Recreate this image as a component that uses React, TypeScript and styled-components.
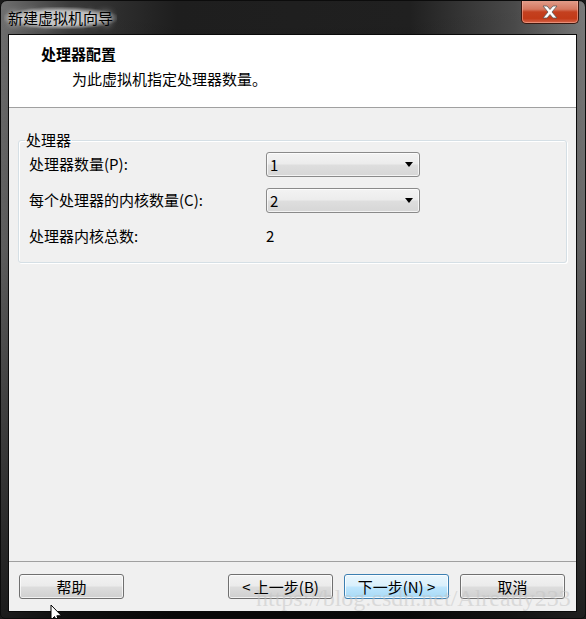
import styled, { createGlobalStyle } from 'styled-components';

const GlobalStyle = createGlobalStyle`
  html, body {
    margin: 0;
    padding: 0;
    background: #1a1a1a;
  }
  body {
    font-family: "Noto Sans CJK SC", "Noto Sans", "Liberation Sans", sans-serif;
  }
`;

const Window = styled.div`
  position: relative;
  width: 586px;
  height: 619px;
  box-sizing: border-box;
  display: flex;
  flex-direction: column;
  border: 1px solid #0c0c0c;
  border-radius: 7px 7px 5px 5px;
  overflow: hidden;
  background:
    linear-gradient(to bottom, rgba(0, 0, 0, 0) 0%, rgba(0, 0, 0, 0.15) 40%, rgba(0, 0, 0, 0.75) 100%),
    linear-gradient(to right, #6e6e6e 0%, #3a3a3a 12%, #1e1e1e 30%, #202020 70%, #4a4a4a 88%, #7a7a7a 100%);
`;

const TitleBar = styled.div`
  height: 33px;
  display: flex;
  align-items: flex-start;
  justify-content: space-between;
  padding-left: 3px;
  padding-right: 6px;
`;

const Title = styled.div`
  margin-top: 6px;
  padding: 0 4px;
  font-size: 15px;
  line-height: 22px;
  color: #000;
  background: radial-gradient(ellipse at center, rgba(200, 200, 200, 0.85) 45%, rgba(160, 160, 160, 0) 75%);
  text-shadow: 0 0 6px rgba(255, 255, 255, 0.9);
`;

const CloseButton = styled.div`
  width: 58px;
  height: 24px;
  margin-top: -1px;
  box-sizing: border-box;
  border: 1px solid #3a1810;
  border-top: none;
  border-radius: 0 0 5px 5px;
  display: flex;
  align-items: center;
  justify-content: center;
  background: linear-gradient(to bottom, #e3a08e 0%, #d57860 40%, #c4401f 52%, #c23a18 80%, #d5644a 100%);
  box-shadow: inset 0 0 0 1px rgba(255, 190, 170, 0.5);
`;

const Client = styled.div`
  flex: 1;
  margin: 0 8px 6px 7px;
  display: flex;
  flex-direction: column;
  border: 1px solid #0a0a0a;
  background: #f0f0f0;
  color: #000;
`;

const Header = styled.div`
  height: 73px;
  background: #fff;
  border-bottom: 1px solid #a0a0a0;
  padding: 9px 0 0 32px;
  box-sizing: border-box;
`;

const HeaderTitle = styled.div`
  font-size: 15px;
  font-weight: bold;
  line-height: 20px;
`;

const HeaderSub = styled.div`
  margin: 5px 0 0 31px;
  font-size: 15px;
  line-height: 20px;
`;

const Body = styled.div`
  flex: 1;
  padding: 27px 9px 0 9px;
`;

const GroupBox = styled.fieldset`
  margin: 0;
  padding: 1px 10px 8px 10px;
  border: 1px solid #d5dfe5;
  border-radius: 3px;
  box-shadow: inset 1px 1px 0 #fff, 1px 1px 0 #fff;
  display: grid;
  grid-template-columns: 237px 154px;
  grid-auto-rows: 36px;
  align-items: center;
`;

const Legend = styled.legend`
  padding: 0 1px;
  margin-left: -4px;
  font-size: 15px;
  line-height: 10px;
`;

const Label = styled.div`
  font-size: 15px;
  line-height: 20px;
`;

const Value = styled.div`
  font-size: 15px;
  line-height: 20px;
`;

const Select = styled.div`
  height: 25px;
  box-sizing: border-box;
  border: 1px solid #8a8a8a;
  border-radius: 3px;
  display: flex;
  align-items: center;
  justify-content: space-between;
  padding: 0 6px 0 3px;
  font-size: 15px;
  background: linear-gradient(to bottom, #f3f3f3 0%, #ececec 48%, #dedede 52%, #d6d6d6 100%);
  box-shadow: inset 0 0 0 1px rgba(255, 255, 255, 0.7);
`;

const Arrow = styled.span`
  width: 0;
  height: 0;
  border-left: 4px solid transparent;
  border-right: 4px solid transparent;
  border-top: 5px solid #000;
`;

const Footer = styled.div`
  height: 50px;
  box-sizing: border-box;
  border-top: 1px solid #a0a0a0;
  padding: 12px 11px 0 10px;
  display: flex;
  align-items: flex-start;
  justify-content: space-between;
`;

const ButtonGroup = styled.div`
  display: flex;
  gap: 11px;
`;

const Button = styled.div<{ $default?: boolean }>`
  width: 105px;
  height: 25px;
  box-sizing: border-box;
  border: 1px solid ${({ $default }) => ($default ? '#3c7fb1' : '#707070')};
  border-radius: 3px;
  display: flex;
  align-items: center;
  justify-content: center;
  font-size: 15px;
  line-height: 20px;
  background: ${({ $default }) =>
    $default
      ? 'linear-gradient(to bottom, #eaf6fd 0%, #d9f0fc 48%, #bee6fd 52%, #a7d9f5 100%)'
      : 'linear-gradient(to bottom, #f2f2f2 0%, #ebebeb 48%, #dddddd 52%, #cfcfcf 100%)'};
  box-shadow: inset 0 0 0 1px ${({ $default }) => ($default ? 'rgba(255,255,255,0.8)' : 'rgba(255,255,255,0.7)')};
`;

const Watermark = styled.div`
  position: absolute;
  left: 255px;
  top: 583px;
  font-family: "Liberation Serif", "DejaVu Serif", serif;
  font-size: 24px;
  line-height: 28px;
  color: rgba(195, 195, 195, 0.5);
  white-space: nowrap;
  pointer-events: none;
`;

const Cursor = styled.svg`
  position: absolute;
  left: 49px;
  top: 603px;
`;

export default function App() {
  return (
    <>
      <GlobalStyle />
      <Window>
        <TitleBar>
          <Title>新建虚拟机向导</Title>
          <CloseButton>
            <svg width="18" height="14" viewBox="0 0 18 14">
              <path
                d="M2 1 L6 1 L9 4.5 L12 1 L16 1 L11 7 L16 13 L12 13 L9 9.5 L6 13 L2 13 L7 7 Z"
                fill="#fff"
                stroke="#5a5a5a"
                strokeWidth="0.8"
                strokeLinejoin="round"
              />
            </svg>
          </CloseButton>
        </TitleBar>
        <Client>
          <Header>
            <HeaderTitle>处理器配置</HeaderTitle>
            <HeaderSub>为此虚拟机指定处理器数量。</HeaderSub>
          </Header>
          <Body>
            <GroupBox>
              <Legend>处理器</Legend>
              <Label>处理器数量(P):</Label>
              <Select>
                <span>1</span>
                <Arrow />
              </Select>
              <Label>每个处理器的内核数量(C):</Label>
              <Select>
                <span>2</span>
                <Arrow />
              </Select>
              <Label>处理器内核总数:</Label>
              <Value>2</Value>
            </GroupBox>
          </Body>
          <Footer>
            <Button>帮助</Button>
            <ButtonGroup>
              <Button>&lt; 上一步(B)</Button>
              <Button $default>下一步(N) &gt;</Button>
              <Button>取消</Button>
            </ButtonGroup>
          </Footer>
        </Client>
        <Watermark>https://blog.csdn.net/Already233</Watermark>
        <Cursor width="14" height="18" viewBox="0 0 14 18">
          <path d="M1 1 L1 16 L4.5 12.5 L7 18 L9 17 L6.8 11.8 L11.5 11.8 Z" fill="#fff" stroke="#000" strokeWidth="1" />
        </Cursor>
      </Window>
    </>
  );
}
